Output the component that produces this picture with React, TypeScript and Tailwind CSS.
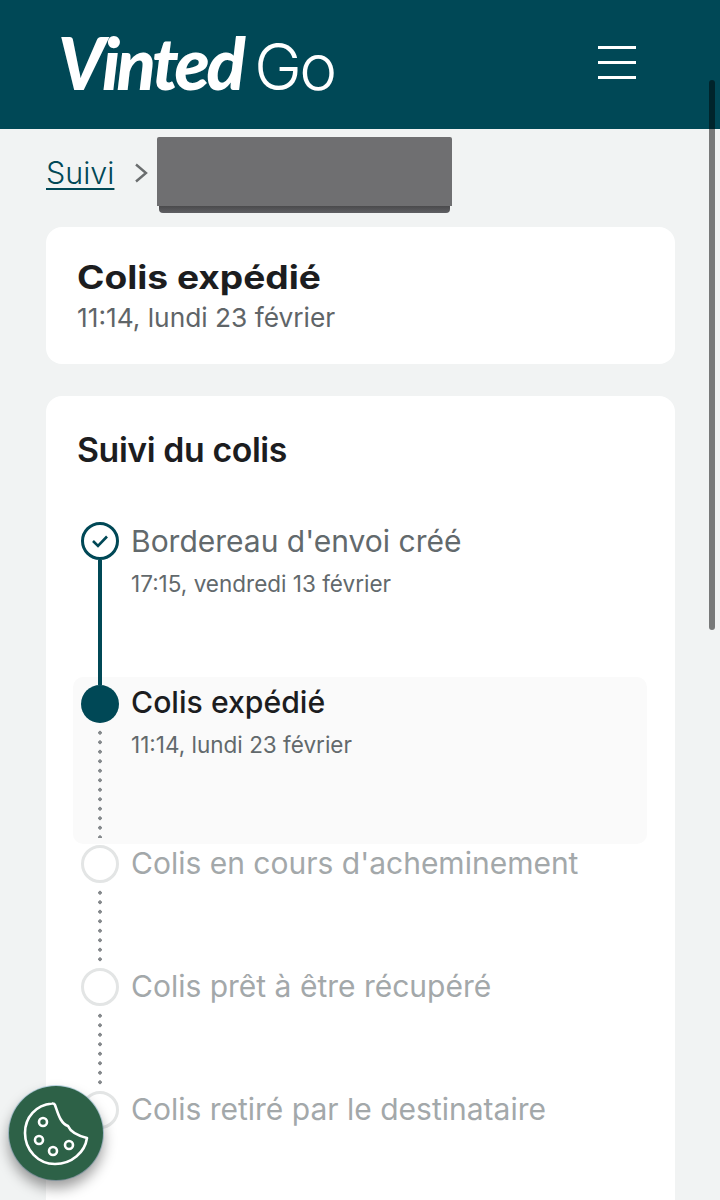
import React from "react";

const dots = "w-[4px] flex-1 bg-[radial-gradient(circle,#85898c_1.7px,transparent_2px)] bg-[length:4px_9.5px] bg-repeat-y";

function Row({ title, tone, height, children }: { title: string; tone: string; height: string; children?: React.ReactNode }) {
  return (
    <div className={`flex ${height}`}>
      <div className="w-[38px] shrink-0 flex flex-col items-center">
        <div className="w-[38px] h-[38px] shrink-0 rounded-full border-[3px] border-[#e3e5e5] bg-white" />
        {children}
      </div>
      <div className={`ml-[12px] mt-[-1px] text-[30px] leading-[38px] whitespace-nowrap ${tone}`}>{title}</div>
    </div>
  );
}

export default function App() {
  return (
    <div className="relative w-[720px] h-[1200px] overflow-hidden bg-[#f1f3f3] font-['Inter',sans-serif]">
      <header className="h-[129px] bg-[#004856] flex items-center justify-between pl-[58px] pr-[84px]">
        <div className="flex items-baseline text-white mt-[-4px]">
          <span className="font-['Lato',sans-serif] font-black italic text-[72px] leading-none tracking-[-3.4px]">Vinted</span>
          <span className="ml-[12px] font-['Inter',sans-serif] font-light text-[64px] leading-none tracking-[-2.5px]">Go</span>
        </div>
        <div className="w-[38px] flex flex-col gap-[12px] mt-[-4px]">
          <div className="h-[3px] bg-white" />
          <div className="h-[3px] bg-white" />
          <div className="h-[3px] bg-white" />
        </div>
      </header>

      <main className="pl-[46px] pr-[45px]">
        <div className="flex items-center h-[98px]">
          <a className="text-[#004856] text-[30.5px] font-light underline underline-offset-[4px] decoration-[2px] leading-none mt-[-10px]">Suivi</a>
          <svg className="ml-[20px] mt-[-10px]" width="15" height="22" viewBox="0 0 15 22" fill="none" stroke="#6a6d6e" strokeWidth="2.4">
            <path d="M2 2.5 L12 11 L2 19.5" />
          </svg>
          <div className="ml-[8px] w-[295px] h-[76px] mt-[4px] mb-[10px] flex flex-col items-center">
            <div className="w-full h-[69px] bg-[#6f6f71] rounded-t-[2px]" />
            <div className="w-[291px] h-[7px] bg-[linear-gradient(#4a4a4c,#5f5f63)] rounded-b-[4px]" />
          </div>
        </div>

        <section className="h-[137px] bg-white rounded-[16px] px-[31px] pt-[31px]">
          <h1 className="text-[#1c1d1f] font-['Inter',sans-serif] font-bold text-[32px] leading-[40px] origin-left scale-x-[1.16]">Colis expédié</h1>
          <p className="text-[#5f6568] text-[26.3px] leading-[38px] mt-[1px]">11:14, lundi 23 février</p>
        </section>

        <section className="mt-[32px] h-[900px] bg-white rounded-[16px] pl-[35px] pr-[28px] pt-[33px]">
          <h2 className="ml-[-4px] text-[#1c1d1f] font-semibold text-[33.8px] leading-[42px] tracking-[-0.4px]">Suivi du colis</h2>

          <div className="mt-[51px]">
            <div className="flex h-[155px]">
              <div className="w-[38px] shrink-0 flex flex-col items-center">
                <div className="w-[38px] h-[38px] shrink-0 rounded-full border-[3px] border-[#004856] flex items-center justify-center">
                  <svg width="18" height="14" viewBox="0 0 18 14" fill="none" stroke="#004856" strokeWidth="2.6">
                    <path d="M2 7 L7 12 L16 2.5" />
                  </svg>
                </div>
                <div className="w-[4px] flex-1 bg-[#004856]" />
              </div>
              <div className="ml-[12px]">
                <div className="text-[#62696c] text-[30px] leading-[38px] whitespace-nowrap">Bordereau d'envoi créé</div>
                <div className="text-[#62696c] text-[22.5px] leading-[30px] mt-[9px] whitespace-nowrap">17:15, vendredi 13 février</div>
              </div>
            </div>

            <div className="flex h-[167px] -ml-[8px] pl-[8px] bg-[#fafafa] rounded-[10px]">
              <div className="w-[38px] shrink-0 flex flex-col items-center">
                <div className="w-[4px] h-[8px] bg-[#004856]" />
                <div className="w-[38px] h-[38px] shrink-0 rounded-full bg-[#004856]" />
                <div className={`${dots} mt-[5px] mb-[6px]`} />
              </div>
              <div className="ml-[12px] pt-[6px]">
                <div className="text-[#1c1d1f] font-medium text-[30.2px] leading-[38px] whitespace-nowrap">Colis expédié</div>
                <div className="text-[#62696c] text-[22.5px] leading-[30px] mt-[9px] whitespace-nowrap">11:14, lundi 23 février</div>
              </div>
            </div>

            <div className="pt-px">
              <Row title="Colis en cours d'acheminement" tone="text-[#a3a8aa]" height="h-[123px]">
                <div className={`${dots} my-[5px]`} />
              </Row>
              <Row title="Colis prêt à être récupéré" tone="text-[#a3a8aa]" height="h-[123px]">
                <div className={`${dots} my-[5px]`} />
              </Row>
              <Row title="Colis retiré par le destinataire" tone="text-[#a3a8aa]" height="h-[60px]" />
            </div>
          </div>
        </section>
      </main>

      <div className="absolute left-[709px] top-[80px] w-[6px] h-[550px] rounded-full bg-black/50" />

      <button className="absolute left-[9px] top-[1086px] w-[94px] h-[94px] rounded-full bg-[#2d6147] shadow-[0_8px_14px_rgba(0,0,0,0.4),0_0_0_1px_rgba(110,170,200,0.45)] ">
        <svg width="94" height="94" viewBox="0 0 94 94" fill="none" stroke="#ffffff" strokeWidth="2.6" strokeLinejoin="round">
          <path d="M43 17.5 C27 19 16 31 16 47 C16 64 29 78 46 78 C63 78 76 66 78 52 C70 50 62 47 59 40 C51 37 49 27 46 19 C45.5 17.7 44.5 17.3 43 17.5 Z" />
          <circle cx="34" cy="36" r="4" />
          <circle cx="30" cy="54" r="4" />
          <circle cx="44" cy="65" r="4" />
          <circle cx="60" cy="59" r="4" />
        </svg>
      </button>
    </div>
  );
}
